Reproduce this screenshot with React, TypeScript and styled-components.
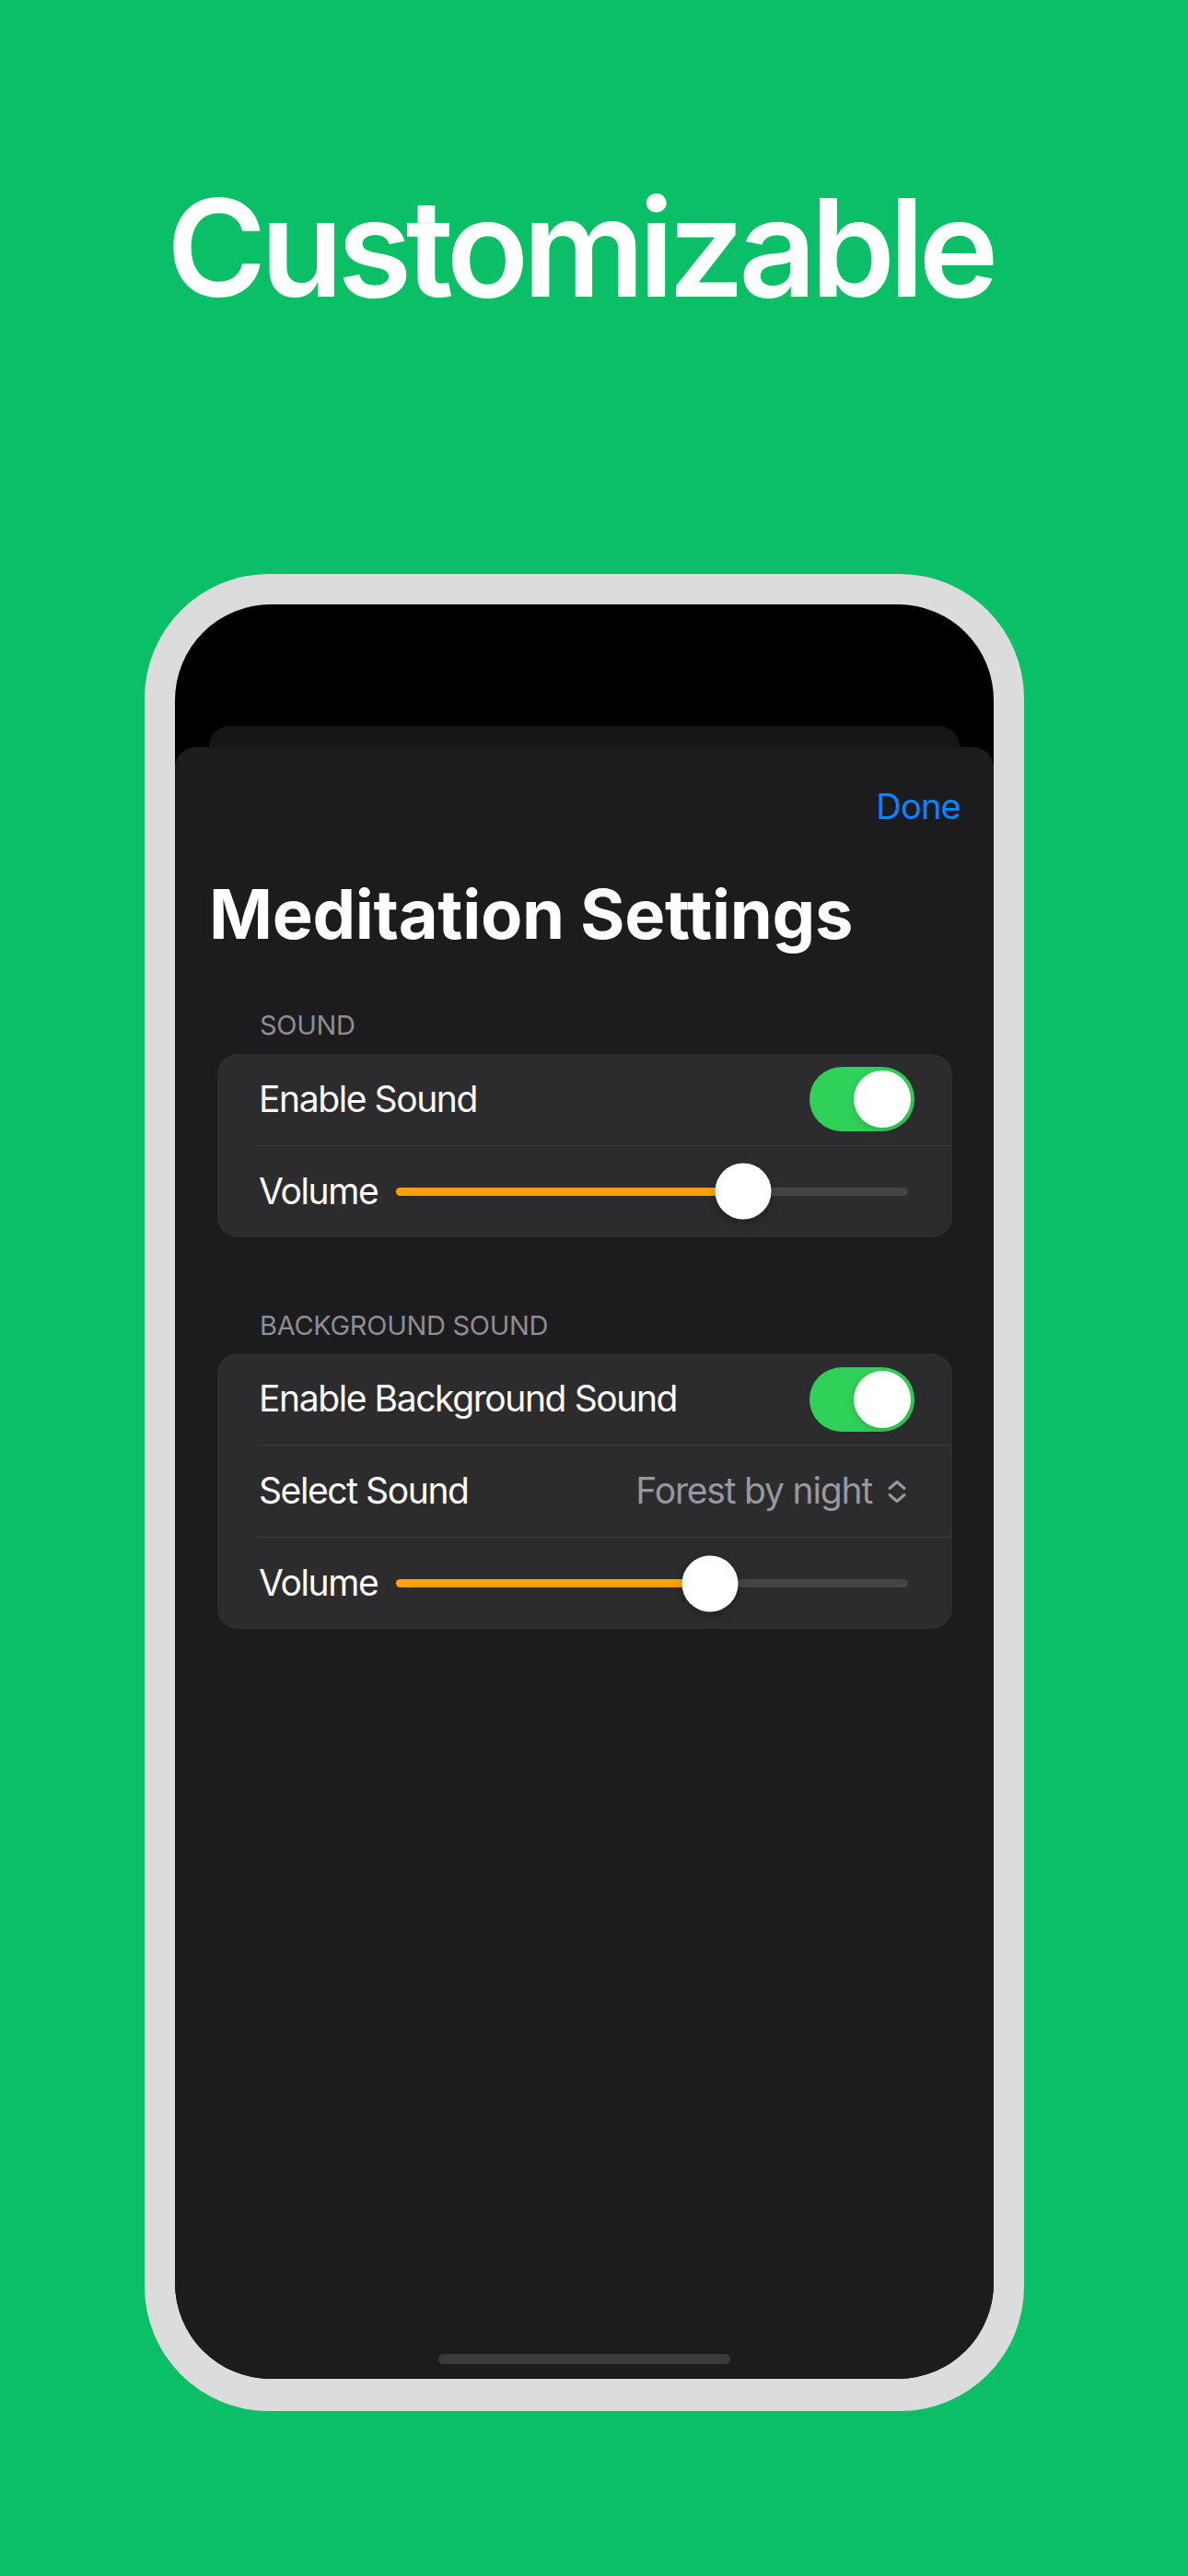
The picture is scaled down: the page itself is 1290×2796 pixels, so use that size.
import React from 'react';
import styled, { createGlobalStyle } from 'styled-components';

const GlobalStyle = createGlobalStyle`
  html, body {
    margin: 0;
    padding: 0;
    background: #0bbf67;
  }

  body {
    font-family: Inter, "Noto Sans", "Liberation Sans", sans-serif;
    -webkit-font-smoothing: antialiased;
  }
`;

interface SliderProps {
  value: number;
}

function Slider({ value }: SliderProps) {
  return (
    <Track>
      <Fill style={{ width: `${value * 100}%` }} />
      <Knob style={{ left: `${value * 100}%` }} />
    </Track>
  );
}

function Toggle() {
  return (
    <Switch>
      <SwitchKnob />
    </Switch>
  );
}

function UpDownChevron() {
  return (
    <Chevron width="22" height="26" viewBox="0 0 22 26" fill="none">
      <path d="M3 9.5 L11 2.5 L19 9.5" stroke="#98989f" strokeWidth="3" strokeLinecap="round" strokeLinejoin="round" />
      <path d="M3 16.5 L11 23.5 L19 16.5" stroke="#98989f" strokeWidth="3" strokeLinecap="round" strokeLinejoin="round" />
    </Chevron>
  );
}

function App() {
  return (
    <Page>
      <GlobalStyle />
      <Headline>Customizable</Headline>
      <Phone>
        <Screen>
          <BackCard />
          <Sheet>
            <TopBar>
              <DoneButton>Done</DoneButton>
            </TopBar>
            <Title>Meditation Settings</Title>

            <SectionHeader>SOUND</SectionHeader>
            <Card>
              <Row>
                <Label>Enable Sound</Label>
                <Toggle />
              </Row>
              <Row>
                <Label>Volume</Label>
                <Slider value={0.678} />
              </Row>
            </Card>

            <SectionHeader $spaced>BACKGROUND SOUND</SectionHeader>
            <Card>
              <Row>
                <Label>Enable Background Sound</Label>
                <Toggle />
              </Row>
              <Row>
                <Label>Select Sound</Label>
                <Picker>
                  Forest by night
                  <UpDownChevron />
                </Picker>
              </Row>
              <Row>
                <Label>Volume</Label>
                <Slider value={0.613} />
              </Row>
            </Card>

            <HomeIndicator />
          </Sheet>
        </Screen>
      </Phone>
    </Page>
  );
}

const Page = styled.div`
  width: 1290px;
  min-height: 2796px;
  box-sizing: border-box;
  padding: 181px 21px 0 0;

  display: flex;
  flex-direction: column;
  align-items: center;

  background: #0bbf67;
`;

const Headline = styled.h1`
  margin: 0 10px 0 0;
  font-size: 147px;
  line-height: 1.2;
  font-weight: 600;
  letter-spacing: -0.044em;
  color: #ffffff;
`;

const Phone = styled.div`
  margin-top: 266px;
  width: 955px;
  height: 1994px;
  box-sizing: border-box;
  padding: 33px 33px 35px;

  background: #dcdcdc;
  border-radius: 135px;
`;

const Screen = styled.div`
  height: 100%;
  display: flex;
  flex-direction: column;
  padding-top: 132px;
  box-sizing: border-box;

  background: #000000;
  border-radius: 104px;
  overflow: hidden;
`;

const BackCard = styled.div`
  height: 23px;
  margin: 0 37px;
  background: #161616;
  border-radius: 22px 22px 0 0;
`;

const Sheet = styled.div`
  flex: 1;
  display: flex;
  flex-direction: column;
  padding: 42px 45px 16px 46px;

  background: #1c1c1e;
  border-radius: 22px 22px 0 0;
`;

const TopBar = styled.div`
  display: flex;
  justify-content: flex-end;
  margin-right: -9px;
`;

const DoneButton = styled.div`
  font-size: 38px;
  line-height: 1.2;
  letter-spacing: -0.02em;
  color: #0a84ff;
`;

const Title = styled.h2`
  margin: 49px 0 0 -9px;
  font-size: 74px;
  line-height: 1.2;
  font-weight: 700;
  letter-spacing: -0.004em;
  color: #ffffff;
`;

const SectionHeader = styled.div<{ $spaced?: boolean }>`
  margin-top: ${(p) => (p.$spaced ? '79px' : '59px')};
  padding-left: 46px;
  margin-bottom: 13px;

  font-size: 29px;
  line-height: 1.2;
  letter-spacing: -0.01em;
  color: #8d8d93;
`;

const Card = styled.div`
  display: flex;
  flex-direction: column;
  background: #2c2c2e;
  border-radius: 22px;
`;

const Row = styled.div`
  height: 99px;
  margin-left: 44px;
  padding: 0 41px 0 1px;

  display: flex;
  align-items: center;
  justify-content: space-between;

  & + & {
    border-top: 1px solid #3d3d40;
  }
`;

const Label = styled.div`
  font-size: 39px;
  line-height: 1.2;
  letter-spacing: -0.036em;
  color: #ffffff;
  white-space: nowrap;
`;

const Switch = styled.div`
  width: 114px;
  height: 70px;
  box-sizing: border-box;
  padding: 4px;

  display: flex;
  justify-content: flex-end;

  background: #30d158;
  border-radius: 35px;
`;

const SwitchKnob = styled.div`
  width: 62px;
  height: 62px;
  background: #ffffff;
  border-radius: 50%;
  box-shadow: 0 3px 8px rgba(0, 0, 0, 0.15);
`;

const Track = styled.div`
  position: relative;
  flex: 1;
  height: 9px;
  margin: 0 7px 0 20px;

  background: #444446;
  border-radius: 5px;
`;

const Fill = styled.div`
  height: 100%;
  background: #ff9f0a;
  border-radius: 5px;
`;

const Knob = styled.div`
  position: absolute;
  top: 50%;
  width: 61px;
  height: 61px;
  transform: translate(-50%, -50%);

  background: #ffffff;
  border-radius: 50%;
  box-shadow: 0 4px 10px rgba(0, 0, 0, 0.25);
`;

const Picker = styled.div`
  display: flex;
  align-items: center;
  gap: 16px;
  margin-right: 8px;

  font-size: 39px;
  line-height: 1.2;
  letter-spacing: -0.03em;
  color: #98989f;
`;

const Chevron = styled.svg`
  display: block;
`;

const HomeIndicator = styled.div`
  margin: auto auto 0;
  width: 317px;
  height: 11px;
  background: #3a3a3c;
  border-radius: 6px;
  transform: translateX(-1px);
`;

export default App;
